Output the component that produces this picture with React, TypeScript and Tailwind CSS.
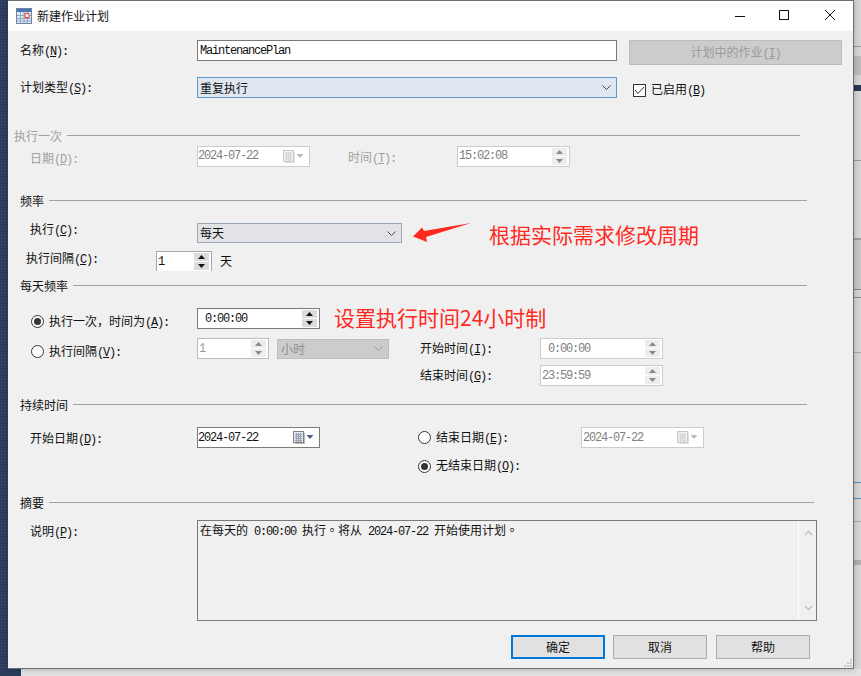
import React from "react";

const M = ({ children, className = "" }: { children: React.ReactNode; className?: string }) => (
  <span className={`whitespace-pre font-['Liberation_Mono',monospace] text-[12px] font-light tracking-[-1.2px] ${className}`}>{children}</span>
);

const L = ({ t, k, tail = "):" }: { t: string; k: string; tail?: string }) => (
  <span className="whitespace-nowrap">
    {t}
    <M>
      (<u>{k}</u>){tail.replace(")", "")}
    </M>
  </span>
);

const Tri = ({ up, off }: { up?: boolean; off?: boolean }) => (
  <svg width="7" height="4" viewBox="0 0 7 4" className="block">
    <path d={up ? "M3.5 0L7 4H0Z" : "M0 0H7L3.5 4Z"} fill={off ? "#8a8a8a" : "#111"} />
  </svg>
);

const Spin = ({ off }: { off?: boolean }) => (
  <div className="ml-auto mr-[2px] flex w-[15px] flex-col gap-px">
    <div className={`flex h-[8px] items-center justify-center ${off ? "bg-[#ededed]" : "bg-[#dcdcdc]"}`}>
      <Tri up off={off} />
    </div>
    <div className={`flex h-[8px] items-center justify-center ${off ? "bg-[#ededed]" : "bg-[#dcdcdc]"}`}>
      <Tri off={off} />
    </div>
  </div>
);

const Cal = ({ off }: { off?: boolean }) => (
  <svg width="21" height="13" viewBox="0 0 21 13" className="ml-auto mr-[5px] block">
    <rect x="0.5" y="0.5" width="10" height="11" fill={off ? "#f2f2f2" : "#e4e8ee"} stroke={off ? "#c8c8c8" : "#808080"} />
    <path d="M2 3.5H9M2 5.5H9M2 7.5H9M2 9.5H9M3.5 2V11M5.5 2V11M7.5 2V11" stroke={off ? "#d4d4dc" : "#9aa3b5"} strokeWidth="1" />
    <path d="M11.5 2V12.5H2" fill="none" stroke={off ? "#e0e0e0" : "#b8b8b8"} />
    <path d="M13.5 4H20.5L17 8Z" fill={off ? "#b9b9b9" : "#4e5f85"} />
  </svg>
);

const Radio = ({ on }: { on?: boolean }) => (
  <span className="flex h-[13px] w-[13px] shrink-0 items-center justify-center rounded-full border border-[#333] bg-white">
    {on && <span className="h-[7px] w-[7px] rounded-full bg-[#333]" />}
  </span>
);

const Chevron = ({ color = "#444" }: { color?: string }) => (
  <svg width="9" height="5" viewBox="0 0 9 5" className="ml-auto mr-[5px] block">
    <path d="M0.5 0.5L4.5 4.5L8.5 0.5" fill="none" stroke={color} />
  </svg>
);

const Heading = ({ t, off, line, className }: { t: string; off?: boolean; line: string; className: string }) => (
  <div className={`flex h-[16px] items-center ${className}`}>
    <span className={off ? "text-[#a0a0a0]" : ""}>{t}</span>
    <div className={`ml-[5px] h-[2px] border-t border-[#a0a0a0] border-b-white ${line}`} />
  </div>
);

export default function App() {
  return (
    <div className="relative flex h-[676px] w-[861px] overflow-hidden bg-[#d6d6d6] font-['Noto_Sans_CJK_SC',sans-serif] text-[12px] leading-[16px] text-[#111]">
      <div className="absolute bottom-0 left-0 top-0 w-[8px] bg-[#2b3d5c] bg-[radial-gradient(#3f5272_1px,transparent_1px)] bg-[length:3px_3px]" />
      <div className="absolute bottom-0 left-0 h-[8px] w-[21px] bg-[#2b3d5c]" />
      <div className="absolute bottom-0 left-[21px] right-0 h-[7px] bg-[#e2e2e2]" />
      <div className="absolute left-[854px] top-[46px] h-px w-[7px] bg-[#999]" />
      <div className="absolute left-[854px] top-[56px] h-[19px] w-[7px] bg-[#bdbdbd]" />
      <div className="absolute left-[854px] top-[85px] h-[6px] w-[7px] bg-[#26345a]" />
      <div className="absolute left-[854px] top-[160px] h-px w-[7px] bg-[#999]" />
      <div className="absolute left-[854px] top-[238px] h-[2px] w-[7px] bg-[#a0a0a0]" />
      <div className="absolute left-[854px] top-[240px] h-[50px] w-[7px] bg-[#c8c8c8]" />
      <div className="absolute left-[854px] top-[289px] h-px w-[7px] bg-[#888]" />
      <div className="absolute left-[854px] top-[297px] h-px w-[7px] bg-[#888]" />
      <div className="absolute left-[854px] top-[352px] h-px w-[7px] bg-[#aaa]" />
      <div className="absolute left-[854px] top-[482px] h-px w-[7px] bg-[#4a90c0]" />
      <div className="absolute left-[854px] top-[498px] h-px w-[7px] bg-[#4a90c0]" />
      <div className="absolute left-[854px] top-[521px] h-px w-[7px] bg-[#aaa]" />
      <div className="absolute left-[854px] top-[560px] h-[5px] w-[7px] bg-[#b0b0b0]" />

      <div className="relative ml-[8px] flex h-[669px] w-[846px] flex-col border-b border-r border-t border-[#6e6e6e] bg-[#f0f0f0] shadow-[0_0_6px_rgba(0,0,0,0.25)]">
        {/* title bar */}
        <div className="flex h-[30px] shrink-0 items-center bg-white pl-[8px]">
          <svg width="16" height="16" viewBox="0 0 16 16" className="block">
            <rect x="0.5" y="0.5" width="15" height="15" fill="#dfe7f3" stroke="#6d85ad" />
            <rect x="1" y="1" width="14" height="3" fill="#4f74b3" />
            <path d="M1 7.5H15M1 10.5H15M1 13H15M4.5 4V15M8 4V15M11.5 4V15" stroke="#93a6c6" />
            <rect x="9" y="5.5" width="4" height="4" fill="#fff" stroke="#e0482e" />
          </svg>
          <span className="ml-[5px]">新建作业计划</span>
          <svg width="120" height="16" viewBox="0 0 120 16" className="ml-auto mr-0 block">
            <path d="M2 8.5H12" stroke="#111" />
            <rect x="46.5" y="2.5" width="9" height="9" fill="none" stroke="#111" />
            <path d="M92 2L102 12M102 2L92 12" stroke="#111" />
          </svg>
        </div>

        {/* name */}
        <div className="mt-[9px] flex h-[25px] shrink-0 items-start pl-[12px]">
          <div className="w-[177px] pt-[2px]"><L t="名称" k="N" /></div>
          <div className="flex h-[21px] w-[420px] items-center border border-[#7a7a7a] bg-white pl-[2px]"><M>MaintenancePlan</M></div>
          <div className="ml-[12px] flex h-[25px] w-[213px] items-center justify-center border border-[#bcbcbc] bg-[#cccccc] text-[#9a9a9a]">
            <span>计划中的作业<M>(<u>I</u>)</M></span>
          </div>
        </div>

        {/* type */}
        <div className="mt-[12px] flex h-[21px] shrink-0 items-center pl-[12px]">
          <div className="w-[177px]"><L t="计划类型" k="S" /></div>
          <div className="flex h-[21px] w-[420px] items-center border border-[#5b9aca] bg-[#e1e7f0] pl-[2px]">
            重复执行<Chevron />
          </div>
          <span className="ml-[16px] mt-[5px] flex h-[13px] w-[13px] items-center justify-center border border-[#333] bg-white">
            <svg width="11" height="9" viewBox="0 0 11 9" className="block"><path d="M1 4L4 7.5L10 1" fill="none" stroke="#333" /></svg>
          </span>
          <span className="ml-[5px] mt-[5px]">已启用<M>(<u>B</u>)</M></span>
        </div>

        <Heading t="执行一次" off line="w-[733px]" className="mt-[30px] pl-[6px]" />

        {/* once */}
        <div className="mt-px flex h-[22px] shrink-0 items-center pl-[22px] text-[#a0a0a0]">
          <div className="w-[167px] translate-y-[3px]"><L t="日期" k="D" /></div>
          <div className="flex h-[21px] w-[113px] items-center border border-[#cccccc] bg-white pl-0 text-[#808080]"><M>2024-07-22</M><Cal off /></div>
          <div className="ml-[38px] w-[109px] translate-y-[2px]"><L t="时间" k="T" /></div>
          <div className="flex h-[21px] w-[113px] items-center border border-[#cccccc] bg-white pl-px text-[#808080]"><M>15:02:08</M><Spin off /></div>
        </div>

        <Heading t="频率" line="w-[758px]" className="mt-[26px] pl-[12px]" />

        {/* exec */}
        <div className="mt-[14px] flex h-[20px] shrink-0 items-center pl-[22px]">
          <div className="w-[167px] -translate-y-[3px]"><L t="执行" k="C" /></div>
          <div className="flex h-[20px] w-[205px] items-center border border-[#9aa7b5] bg-[#e1e3e6] pl-[2px]">每天<Chevron /></div>
          <svg width="60" height="20" viewBox="0 0 60 20" className="ml-[10px] block overflow-visible">
            <path d="M1 13.5L10 4.5L12 8L59 0L14 14L15 19Z" fill="#ff2a1f" />
          </svg>
          <span className="ml-[17px] translate-y-px whitespace-nowrap text-[21px] leading-[28px] text-[#ff2a1f]">根据实际需求修改周期</span>
        </div>

        {/* interval */}
        <div className="mt-[8px] flex h-[20px] shrink-0 items-center pl-[18px]">
          <div className="w-[130px] -translate-y-[2px]"><L t="执行间隔" k="C" /></div>
          <div className="flex h-[20px] w-[56px] items-center border border-b-0 border-[#a8a8a8] bg-white pl-px"><M>1</M><Spin /></div>
          <span className="ml-[8px]">天</span>
        </div>

        <Heading t="每天频率" line="w-[734px]" className="mt-[7px] pl-[12px]" />

        {/* daily once */}
        <div className="mt-[14px] flex h-[21px] shrink-0 items-center pl-[23px]">
          <div className="flex w-[166px] translate-y-[3px] items-center">
            <Radio on />
            <span className="ml-[5px] whitespace-nowrap">执行一次，时间为<M>(<u>A</u>):</M></span>
          </div>
          <div className="flex h-[21px] w-[123px] items-center border border-[#7a7a7a] bg-white pl-[7px]"><M>0:00:00</M><Spin /></div>
          <span className="ml-[14px] -translate-y-[2px] whitespace-nowrap text-[21px] leading-[26px] text-[#ff2a1f]">设置执行时间24小时制</span>
        </div>

        {/* daily interval */}
        <div className="mt-[9px] flex h-[21px] shrink-0 items-center pl-[23px]">
          <div className="flex w-[166px] translate-y-[3px] items-center">
            <Radio />
            <span className="ml-[5px] whitespace-nowrap">执行间隔<M>(<u>V</u>):</M></span>
          </div>
          <div className="flex h-[21px] w-[72px] items-center border border-[#bcbcbc] bg-white pl-px text-[#999]"><M>1</M><Spin off /></div>
          <div className="ml-[8px] flex h-[20px] w-[112px] items-center border border-[#c0c0c0] bg-[#cccccc] pl-[3px] text-[#8e8e8e]">小时<Chevron color="#9a9a9a" /></div>
          <div className="ml-[31px] w-[120px]"><L t="开始时间" k="I" /></div>
          <div className="flex h-[21px] w-[123px] items-center border border-[#cccccc] bg-white pl-[7px] text-[#808080]"><M>0:00:00</M><Spin off /></div>
        </div>

        <div className="mt-[6px] flex h-[21px] shrink-0 items-center pl-[412px]">
          <div className="w-[120px]"><L t="结束时间" k="G" /></div>
          <div className="flex h-[21px] w-[123px] items-center border border-[#cccccc] bg-white pl-px text-[#808080]"><M>23:59:59</M><Spin off /></div>
        </div>

        <Heading t="持续时间" line="w-[734px]" className="mt-[11px] pl-[12px]" />

        {/* start date */}
        <div className="mt-[14px] flex h-[21px] shrink-0 items-center pl-[22px]">
          <div className="w-[167px] translate-y-[1px]"><L t="开始日期" k="D" /></div>
          <div className="flex h-[21px] w-[123px] items-center border border-[#7a7a7a] bg-white pl-0"><M>2024-07-22</M><Cal /></div>
          <div className="ml-[98px] flex w-[163px] items-center">
            <Radio />
            <span className="ml-[5px] whitespace-nowrap">结束日期<M>(<u>E</u>):</M></span>
          </div>
          <div className="flex h-[21px] w-[123px] items-center border border-[#cccccc] bg-white pl-px text-[#808080]"><M>2024-07-22</M><Cal off /></div>
        </div>

        <div className="mt-[10px] flex h-[16px] shrink-0 items-center pl-[410px]">
          <Radio on />
          <span className="ml-[5px] whitespace-nowrap">无结束日期<M>(<u>O</u>):</M></span>
        </div>

        <Heading t="摘要" line="w-[765px]" className="mt-[21px] pl-[12px]" />

        {/* summary */}
        <div className="mt-[9px] flex h-[101px] shrink-0 items-start pl-[22px]">
          <div className="w-[167px] pt-[3px]"><L t="说明" k="P" /></div>
          <div className="flex h-[101px] w-[620px] border border-[#7a7a7a] bg-[#f0f0f0]">
            <div className="flex-1 pl-[2px] pt-px">
              在每天的<M> 0:00:00 </M>执行<span className="font-['Noto_Sans_CJK_TC',sans-serif]">。</span>将从<M> 2024-07-22 </M>开始使用计划<span className="font-['Noto_Sans_CJK_TC',sans-serif]">。</span>
            </div>
            <div className="flex w-[18px] flex-col items-center justify-between border-l border-white py-[9px] pl-px">
              <svg width="9" height="6" viewBox="0 0 9 6" className="block"><path d="M1 5L4.5 1.5L8 5" fill="none" stroke="#c4c4c4" strokeWidth="1.6" /></svg>
              <svg width="9" height="6" viewBox="0 0 9 6" className="block"><path d="M1 1L4.5 4.5L8 1" fill="none" stroke="#c4c4c4" strokeWidth="1.6" /></svg>
            </div>
          </div>
        </div>

        {/* buttons */}
        <div className="mt-[14px] flex h-[24px] shrink-0 items-center justify-end gap-[8px] pr-[43px]">
          <div className="flex h-[24px] w-[94px] items-center justify-center border-2 border-[#0078d7] bg-[#e1e1e1]">确定</div>
          <div className="flex h-[24px] w-[94px] items-center justify-center border border-[#adadad] bg-[#e1e1e1]">取消</div>
          <div className="ml-px flex h-[24px] w-[94px] items-center justify-center border border-[#adadad] bg-[#e1e1e1]">帮助</div>
        </div>

        <svg width="9" height="9" viewBox="0 0 9 9" className="absolute bottom-[1px] right-[1px] block">
          <path d="M7 1h2v2H7zM4 4h2v2H4zM7 4h2v2H7zM1 7h2v2H1zM4 7h2v2H4zM7 7h2v2H7z" fill="#c6c6c6" />
        </svg>
      </div>
    </div>
  );
}
